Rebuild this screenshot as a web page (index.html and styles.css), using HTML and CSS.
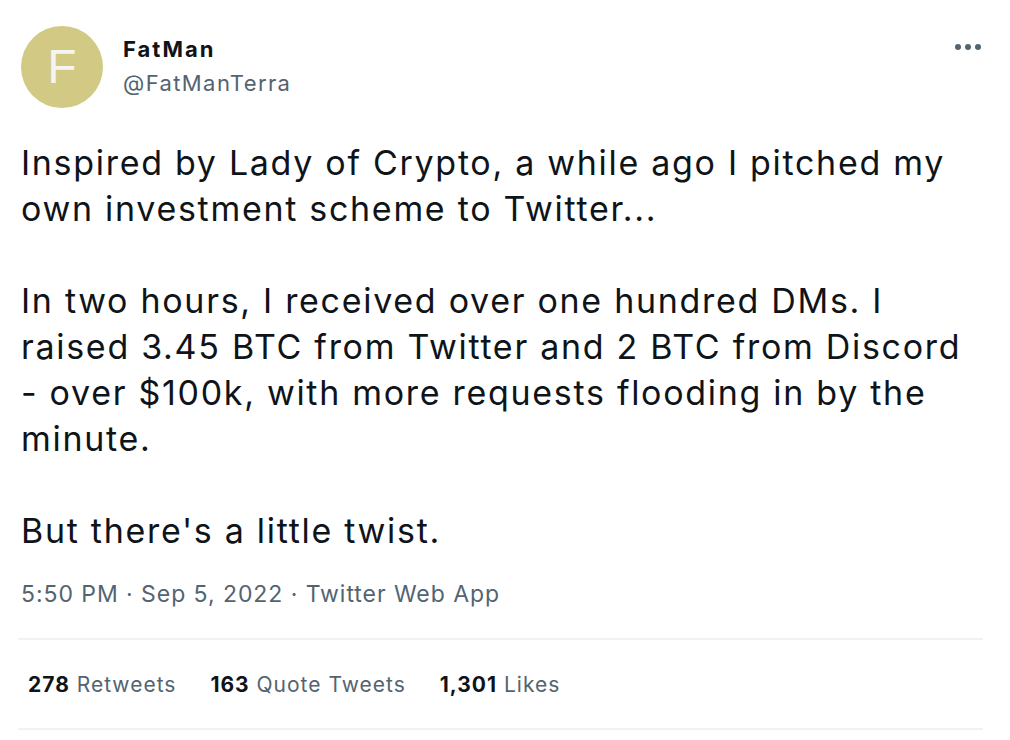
FILE: index.html
```html
<!DOCTYPE html>
<html>
<head>
<meta charset="utf-8">
<link rel="stylesheet" href="styles.css">
</head>
<body>
<div class="tweet">
  <div class="header">
    <div class="avatar">F</div>
    <div class="names">
      <div class="name">FatMan</div>
      <div class="handle">@FatManTerra</div>
    </div>
    <div class="more"><span></span><span></span><span></span></div>
  </div>
  <div class="text">
    <p>Inspired by Lady of Crypto, a while ago I pitched my<br>own investment scheme to Twitter...</p>
    <p>In two hours, I received over one hundred DMs. I<br>raised 3.45 BTC from Twitter and 2 BTC from Discord<br>- over $100k, with more requests flooding in by the<br>minute.</p>
    <p>But there's a little twist.</p>
  </div>
  <div class="meta">5:50 PM · Sep 5, 2022 · Twitter Web App</div>
  <div class="stats">
    <span><b>278</b> Retweets</span>
    <span><b>163</b> Quote Tweets</span>
    <span><b>1,301</b> Likes</span>
  </div>
</div>
</body>
</html>
```
FILE: styles.css
```css
html, body {
  margin: 0;
  padding: 0;
  background: #ffffff;
}
body {
  font-family: Inter, "Liberation Sans", Arial, sans-serif;
  color: #0f1419;
}
.tweet {
  padding: 26px 27px 0 18px;
  width: 965px;
}
.header {
  display: flex;
  align-items: flex-start;
  padding-left: 3px;
}
.avatar {
  width: 82px;
  height: 82px;
  border-radius: 50%;
  background: #d2c984;
  color: #f4f4f0;
  font-family: "Liberation Sans", Arial, sans-serif;
  font-size: 48px;
  line-height: 1;
  display: flex;
  align-items: center;
  justify-content: center;
  flex-shrink: 0;
}
.names {
  margin-left: 20px;
  margin-top: 10px;
  flex: 1;
}
.name {
  font-weight: bold;
  font-size: 22px;
  line-height: 26px;
  letter-spacing: 2px;
}
.handle {
  color: #536471;
  font-size: 22px;
  line-height: 26px;
  margin-top: 8px;
  letter-spacing: 1.4px;
}
.more {
  display: flex;
  gap: 4px;
  margin-top: 18px;
  margin-right: 2px;
}
.more span {
  width: 6px;
  height: 6px;
  border-radius: 50%;
  background: #536471;
}
.text {
  margin-top: 32px;
  padding-left: 3px;
  font-size: 34px;
  line-height: 46px;
  letter-spacing: 1.7px;
}
.text p {
  margin: 0 0 46px 0;
}
.text p:last-child {
  margin-bottom: 0;
}
.meta {
  margin-top: 25px;
  padding-left: 3px;
  color: #536471;
  font-size: 23px;
  line-height: 30px;
  letter-spacing: 0.95px;
  padding-bottom: 29px;
  border-bottom: 2px solid #eff3f4;
}
.stats {
  display: flex;
  gap: 34px;
  font-size: 21px;
  line-height: 30px;
  letter-spacing: 1px;
  color: #536471;
  padding: 30px 0 28px 10px;
  border-bottom: 2px solid #eff3f4;
}
.stats b {
  color: #0f1419;
}
```
